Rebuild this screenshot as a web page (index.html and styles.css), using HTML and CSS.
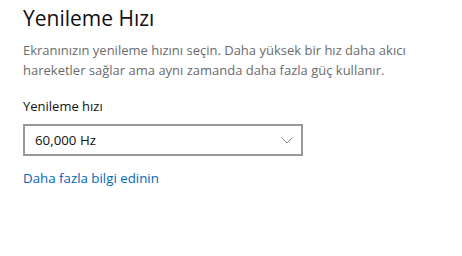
FILE: index.html
```html
<!DOCTYPE html>
<html lang="tr">
<head>
<meta charset="utf-8">
<link rel="stylesheet" href="styles.css">
</head>
<body>
<main class="panel">
  <h1 class="title">Yenileme Hızı</h1>
  <p class="desc">Ekranınızın yenileme hızını seçin. Daha yüksek bir hız daha akıcı hareketler sağlar ama aynı zamanda daha fazla güç kullanır.</p>
  <div class="label">Yenileme hızı</div>
  <div class="select">
    <span class="value">60,000 Hz</span>
    <svg class="chev" width="12" height="7" viewBox="0 0 12 7"><path d="M0.5 0.5 L6 6 L11.5 0.5" fill="none" stroke="#888" stroke-width="1"/></svg>
  </div>
  <a class="link" href="#">Daha fazla bilgi edinin</a>
</main>
</body>
</html>
```
FILE: styles.css
```css
html, body {
  margin: 0;
  background: #fff;
}
.panel {
  padding: 4px 0 0 23px;
  font-family: "Open Sans", "Noto Sans", sans-serif;
  color: #000;
}
.title {
  margin: 0;
  font-size: 21px;
  line-height: 28px;
  font-weight: 400;
  color: #111;
}
.desc {
  margin: 8px 0 0;
  width: 400px;
  font-size: 13px;
  line-height: 20px;
  color: #6b6b6b;
}
.label {
  margin-top: 16px;
  font-size: 13px;
  line-height: 20px;
  color: #111;
}
.select {
  margin-top: 8px;
  box-sizing: border-box;
  width: 280px;
  height: 32px;
  border: 2px solid #999;
  display: flex;
  align-items: center;
  justify-content: space-between;
  padding: 0 8px 0 10px;
  font-size: 13.3px;
  color: #111;
}
.chev {
  display: block;
}
.link {
  display: inline-block;
  margin-top: 12px;
  font-size: 13.3px;
  line-height: 20px;
  color: #0067b8;
  text-decoration: none;
}
```
